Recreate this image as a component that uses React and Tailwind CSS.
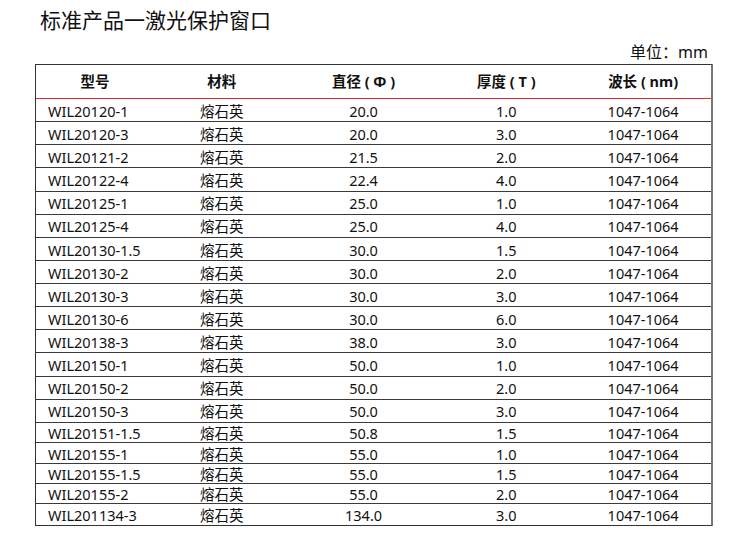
import React from 'react';

const rows = [
  ['WIL20120-1', '熔石英', '20.0', '1.0', '1047-1064'],
  ['WIL20120-3', '熔石英', '20.0', '3.0', '1047-1064'],
  ['WIL20121-2', '熔石英', '21.5', '2.0', '1047-1064'],
  ['WIL20122-4', '熔石英', '22.4', '4.0', '1047-1064'],
  ['WIL20125-1', '熔石英', '25.0', '1.0', '1047-1064'],
  ['WIL20125-4', '熔石英', '25.0', '4.0', '1047-1064'],
  ['WIL20130-1.5', '熔石英', '30.0', '1.5', '1047-1064'],
  ['WIL20130-2', '熔石英', '30.0', '2.0', '1047-1064'],
  ['WIL20130-3', '熔石英', '30.0', '3.0', '1047-1064'],
  ['WIL20130-6', '熔石英', '30.0', '6.0', '1047-1064'],
  ['WIL20138-3', '熔石英', '38.0', '3.0', '1047-1064'],
  ['WIL20150-1', '熔石英', '50.0', '1.0', '1047-1064'],
  ['WIL20150-2', '熔石英', '50.0', '2.0', '1047-1064'],
  ['WIL20150-3', '熔石英', '50.0', '3.0', '1047-1064'],
  ['WIL20151-1.5', '熔石英', '50.8', '1.5', '1047-1064'],
  ['WIL20155-1', '熔石英', '55.0', '1.0', '1047-1064'],
  ['WIL20155-1.5', '熔石英', '55.0', '1.5', '1047-1064'],
  ['WIL20155-2', '熔石英', '55.0', '2.0', '1047-1064'],
  ['WIL201134-3', '熔石英', '134.0', '3.0', '1047-1064'],
];

function Row({ cells, tall, last }) {
  return (
    <div className={`flex items-center pt-[2px] ${tall ? 'h-[23.14px]' : 'h-[20.4px]'} ${last ? '' : 'border-b border-[#3a3a3a]'}`}>
      <div className="w-[118px] pl-[12px]">{cells[0]}</div>
      <div className="w-[136px] text-center">{cells[1]}</div>
      <div className="w-[148px] text-center">{cells[2]}</div>
      <div className="w-[138px] text-center">{cells[3]}</div>
      <div className="w-[136px] text-center">{cells[4]}</div>
    </div>
  );
}

export default function App() {
  return (
    <div className="w-[750px] h-[551px] bg-white text-[#111] font-['Noto_Sans','Noto_Sans_CJK_SC',sans-serif]">
      <div className="pl-[40px] pt-[6px] text-[21px] leading-[28px]">标准产品一激光保护窗口</div>
      <div className="mt-[6px] h-[24px] leading-[24px] text-right pr-[42px] text-[16px]">单位：mm</div>

      <div className="ml-[35px] w-[678px] border-l border-t border-b border-[#333] border-r-2 border-r-[#777] text-[14.5px] leading-none">
        <div className="flex items-center h-[34px] border-b border-[#e42a2a] font-bold">
          <div className="w-[118px] text-center">型号</div>
          <div className="w-[136px] text-center">材料</div>
          <div className="w-[148px] text-center">直径 ( Φ )</div>
          <div className="w-[138px] text-center">厚度 ( T )</div>
          <div className="w-[136px] text-center">波长 ( nm)</div>
        </div>
        {rows.map((r, i) => (
          <Row key={r[0]} cells={r} tall={i < 14} last={i === rows.length - 1} />
        ))}
      </div>
    </div>
  );
}
